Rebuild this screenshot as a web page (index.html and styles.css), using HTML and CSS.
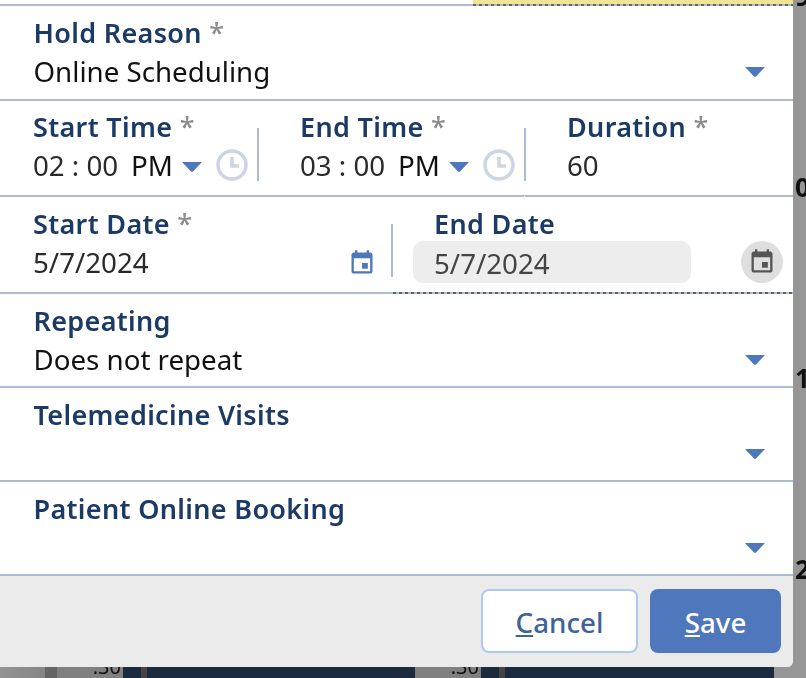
FILE: index.html
```html
<!DOCTYPE html>
<html lang="en">
<head>
    <meta charset="UTF-8">
    <title>Hold</title>
    <link rel="stylesheet" href="styles.css">
</head>
<body>
    <div class="backdrop">
        <div class="strip">
            <div class="cell gray-a"></div>
            <div class="cell slot"></div>
            <div class="cell time">.30</div>
            <div class="cell navy-a"></div>
            <div class="cell slot"></div>
            <div class="cell navy-b"></div>
            <div class="cell time">.30</div>
            <div class="cell navy-a"></div>
            <div class="cell slot"></div>
            <div class="cell navy-c"></div>
        </div>
        <div class="hours">
            <span>9</span>
            <span>0</span>
            <span>1</span>
            <span>2</span>
        </div>
    </div>

    <div class="dialog">
        <div class="top-edge"><div class="highlight"></div></div>

        <div class="row row-select">
            <label class="label">Hold Reason <span class="req">*</span></label>
            <div class="select-line">
                <span class="value">Online Scheduling</span>
                <svg class="caret" viewBox="0 0 20 10"><path d="M0 0h20L11 9.500q-1 .8-2 0z"/></svg>
            </div>
        </div>

        <div class="row row-time">
            <div class="field time-start">
                <label class="label">Start Time <span class="req">*</span></label>
                <div class="time-line">
                    <span class="value dim clock-text">02 : 00</span>
                    <span class="value ampm">PM</span>
                    <svg class="caret" viewBox="0 0 20 10"><path d="M0 0h20L11 9.500q-1 .8-2 0z"/></svg>
                    <svg class="clock" viewBox="0 0 32 32"><circle cx="16" cy="16" r="14" /><path d="M16 8v9h7"/></svg>
                </div>
            </div>
            <div class="divider"></div>
            <div class="field time-end">
                <label class="label">End Time <span class="req">*</span></label>
                <div class="time-line">
                    <span class="value dim clock-text">03 : 00</span>
                    <span class="value ampm">PM</span>
                    <svg class="caret" viewBox="0 0 20 10"><path d="M0 0h20L11 9.500q-1 .8-2 0z"/></svg>
                    <svg class="clock" viewBox="0 0 32 32"><circle cx="16" cy="16" r="14" /><path d="M16 8v9h7"/></svg>
                </div>
            </div>
            <div class="divider notch"></div>
            <div class="field duration">
                <label class="label">Duration <span class="req">*</span></label>
                <div class="time-line">
                    <span class="value dim">60</span>
                </div>
            </div>
        </div>

        <div class="row row-date">
            <div class="field date-start">
                <label class="label">Start Date <span class="req">*</span></label>
                <div class="date-line">
                    <span class="value dim">5/7/2024</span>
                    <svg class="cal" viewBox="0 0 24 24"><path d="M17 12h-5v5h5v-5zM16 1v2H8V1H6v2H5c-1.110 0-1.990.9-1.990 2L3 19c0 1.100.89 2 2 2h14c1.100 0 2-.9 2-2V5c0-1.100-.9-2-2-2h-1V1h-2zm3 18H5V8h14v11z"/></svg>
                </div>
            </div>
            <div class="divider short"></div>
            <div class="field date-end">
                <label class="label">End Date</label>
                <div class="date-line">
                    <span class="value disabled">5/7/2024</span>
                    <span class="cal-btn">
                        <svg class="cal" viewBox="0 0 24 24"><path d="M17 12h-5v5h5v-5zM16 1v2H8V1H6v2H5c-1.110 0-1.990.9-1.990 2L3 19c0 1.100.89 2 2 2h14c1.100 0 2-.9 2-2V5c0-1.100-.9-2-2-2h-1V1h-2zm3 18H5V8h14v11z"/></svg>
                    </span>
                </div>
            </div>
            <div class="dots"></div>
        </div>

        <div class="row row-select">
            <label class="label">Repeating</label>
            <div class="select-line">
                <span class="value">Does not repeat</span>
                <svg class="caret" viewBox="0 0 20 10"><path d="M0 0h20L11 9.500q-1 .8-2 0z"/></svg>
            </div>
        </div>

        <div class="row row-select">
            <label class="label">Telemedicine Visits</label>
            <div class="select-line">
                <span class="value">&nbsp;</span>
                <svg class="caret" viewBox="0 0 20 10"><path d="M0 0h20L11 9.500q-1 .8-2 0z"/></svg>
            </div>
        </div>

        <div class="row row-select">
            <label class="label">Patient Online Booking</label>
            <div class="select-line">
                <span class="value">&nbsp;</span>
                <svg class="caret" viewBox="0 0 20 10"><path d="M0 0h20L11 9.500q-1 .8-2 0z"/></svg>
            </div>
        </div>

        <div class="footer">
            <button class="btn btn-cancel"><u>C</u>ancel</button>
            <button class="btn btn-save"><u>S</u>ave</button>
        </div>
    </div>
</body>
</html>
```

FILE: styles.css
```css
* {
    box-sizing: border-box;
}

html, body {
    margin: 0;
    height: 678px;
    overflow: hidden;
}

body {
    font-family: "Noto Sans", Arial, sans-serif;
    background: #969696;
}

/* calendar behind the dialog */
.backdrop {
    position: fixed;
    inset: 0;
}

.strip {
    position: absolute;
    left: 0;
    right: 32px;
    bottom: 0;
    height: 24px;
    display: flex;
}

.cell {
    height: 100%;
}

.gray-a {
    width: 45px;
    background: linear-gradient(90deg, #939393, #858585);
}

.slot {
    width: 12px;
    background: #656565;
}

.time {
    width: 66px;
    background: #808080;
    color: #111;
    font-size: 20px;
    line-height: 24px;
    text-align: right;
    padding-top: 1px;
    padding-right: 2px;
}

.navy-a {
    width: 18px;
    background: #1c2a40;
}

.strip .slot:nth-child(5),
.strip .slot:nth-child(9) {
    width: 6px;
    background: #444;
}

.navy-b {
    width: 268px;
    background: #1c2a40;
}

.navy-c {
    flex: 1;
    background: #1c2a40;
}

.hours {
    position: absolute;
    left: 795px;
    top: -99px;
    display: flex;
    flex-direction: column;
    font-size: 26px;
    font-weight: 700;
    color: #111;
}

.hours span {
    height: 191px;
    line-height: 191px;
}

/* dialog */
.dialog {
    position: absolute;
    top: 0;
    left: 0;
    width: 793px;
    height: 667px;
    background: #fff;
    border-bottom-right-radius: 6px;
    overflow: hidden;
    display: flex;
    flex-direction: column;
}

.top-edge {
    height: 6px;
    border-bottom: 2px solid #abbbd4;
    position: relative;
}

.highlight {
    position: absolute;
    left: 473px;
    right: 0;
    top: 0;
    height: 6px;
    background:
        repeating-linear-gradient(90deg, #666 0 3px, #abbbd4 3px 6px) bottom / 100% 2px no-repeat,
        #efe48f;
}

.row {
    position: relative;
    border-bottom: 2px solid #abbbd4;
    padding-left: 33px;
}

.row-select {
    height: 94px;
    padding-left: 33.500px;
    padding-right: 28px;
    padding-top: 9px;
}

.row-select:nth-child(2) {
    height: 95px;
}

.row-time {
    height: 96px;
    display: flex;
    padding-top: 8px;
}

.row-date {
    height: 97px;
    display: flex;
    padding-top: 9px;
}

.label {
    display: block;
    font-size: 27px;
    line-height: 36px;
    font-weight: 600;
    color: #1c3a66;
    letter-spacing: 0.33px;
}

.req {
    color: #8c8c8c;
    font-weight: 500;
}

.value {
    font-size: 27.700px;
    line-height: 40px;
    color: #111;
}

.dim {
    color: #2a2a2a;
}

.select-line {
    display: flex;
    align-items: center;
    justify-content: space-between;
    height: 40px;
}

.caret {
    width: 20px;
    height: 10px;
    margin-top: 2px;
    fill: #4f77bb;
    flex: none;
}

.field {
    flex: none;
}

.time-start,
.time-end {
    width: 224px;
}

.time-end {
    margin-left: 41px;
}

.duration {
    margin-left: 41px;
}

.time-line {
    display: flex;
    align-items: center;
    height: 40px;
}

.clock-text {
    width: 87px;
    white-space: nowrap;
}

.ampm {
    margin-left: 11px;
}

.time-line .caret {
    margin-left: 9px;
    margin-top: 4px;
}

.clock {
    width: 32px;
    height: 32px;
    margin-left: 14px;
    fill: none;
    stroke: #cdd5e3;
    stroke-width: 3.500;
}

.divider {
    flex: none;
    width: 2px;
    height: 53px;
    margin-top: 19px;
    background: #abbbd4;
    position: relative;
}

.notch::after {
    content: "";
    position: absolute;
    left: 0;
    top: 68px;
    width: 1px;
    height: 2px;
    background: #fff;
}

.short {
    margin-top: 18px;
    margin-left: 15px;
}

.date-start {
    width: 343px;
}

.date-end {
    margin-left: 20px;
}

.date-end .label {
    padding-left: 21px;
}

.date-line {
    display: flex;
    align-items: center;
    justify-content: space-between;
    height: 42px;
    margin-top: -1px;
}

.date-start .cal {
    fill: #4f77bb;
    margin-top: 2px;
}

.cal {
    width: 28px;
    height: 28px;
    fill: #555;
}

.disabled {
    width: 278px;
    height: 42px;
    padding-left: 21px;
    background: #ededed;
    border-radius: 10px;
    color: #444;
    line-height: 44px;
}

.cal-btn {
    width: 42px;
    height: 42px;
    margin-left: 50px;
    border-radius: 50%;
    background: #dedede;
    display: flex;
    align-items: center;
    justify-content: center;
}

.dots {
    position: absolute;
    left: 393px;
    right: 0;
    bottom: -2px;
    height: 2px;
    background: repeating-linear-gradient(90deg, #5c6470 0 3px, #abbbd4 3px 6px);
}

/* footer buttons */
.footer {
    flex: 1;
    background: #ebebeb;
    display: flex;
    justify-content: flex-end;
    gap: 12px;
    padding: 13px 12px 0 0;
}

.btn {
    height: 64px;
    border-radius: 8px;
    font-family: inherit;
    font-size: 27.700px;
    font-weight: 500;
    padding: 2px 0 0;
}

.btn-cancel {
    width: 157px;
    background: #fff;
    border: 2px solid #b0c8ec;
    color: #3d6496;
}

.btn-save {
    width: 131px;
    background: #4f77bb;
    border: none;
    color: #fff;
}
```
